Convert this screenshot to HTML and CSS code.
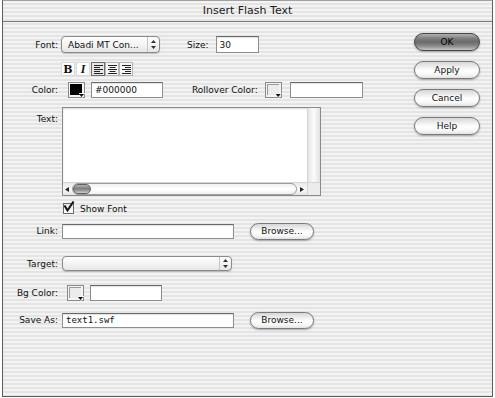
FILE: index.html
```html
<!DOCTYPE html>
<html lang="en">
<head>
    <meta charset="UTF-8">
    <title>Insert Flash Text</title>
    <link rel="stylesheet" href="styles.css">
</head>
<body>
    <div class="window">
        <div class="titlebar">Insert Flash Text</div>

        <div class="content">
            <div class="form">
                <!-- Font and size -->
                <div class="row row-font">
                    <span class="label">Font:</span>
                    <div class="popup popup-font">
                        <span class="popup-text">Abadi MT Con...</span>
                        <span class="popup-arrows">
                            <svg width="5" height="9" viewBox="0 0 5 9"><path d="M2.5 0 L5 3 L0 3 Z M0 6 L5 6 L2.5 9 Z" fill="#333"/></svg>
                        </span>
                    </div>
                    <span class="label-inline size-label">Size:</span>
                    <input class="field field-size" type="text" value="30">
                </div>

                <!-- Style buttons -->
                <div class="row row-style">
                    <span class="tool tool-b">B</span>
                    <span class="tool tool-i">I</span>
                    <span class="tool tool-on">
                        <svg width="9" height="9" viewBox="0 0 9 9"><path d="M0 0.5H9M0 2.5H6M0 4.5H9M0 6.5H6M0 8.5H9" stroke="#222" stroke-width="1"/></svg>
                    </span>
                    <span class="tool">
                        <svg width="9" height="9" viewBox="0 0 9 9"><path d="M0 0.5H9M1.5 2.5H7.5M0 4.5H9M1.5 6.5H7.5M0 8.5H9" stroke="#222" stroke-width="1"/></svg>
                    </span>
                    <span class="tool">
                        <svg width="9" height="9" viewBox="0 0 9 9"><path d="M0 0.5H9M3 2.5H9M0 4.5H9M3 6.5H9M0 8.5H9" stroke="#222" stroke-width="1"/></svg>
                    </span>
                </div>

                <!-- Colors -->
                <div class="row row-color">
                    <span class="label">Color:</span>
                    <span class="swatch swatch-color"><span class="swatch-fill black"></span></span>
                    <input class="field field-hex" type="text" value="#000000">
                    <span class="label-inline rollover-label">Rollover Color:</span>
                    <span class="swatch swatch-rollover"><span class="swatch-fill"></span></span>
                    <input class="field field-rollover" type="text" value="">
                </div>

                <!-- Text area -->
                <div class="row row-text">
                    <span class="label label-top">Text:</span>
                    <div class="textbox">
                        <div class="text-area"></div>
                        <div class="vscroll"></div>
                        <div class="hscroll">
                            <svg class="arrow" width="9" height="7" viewBox="0 0 9 7"><path d="M2 3.5 L6 1 L6 6 Z" fill="#222"/></svg>
                            <div class="htrack"><div class="thumb"></div></div>
                            <svg class="arrow" width="10" height="7" viewBox="0 0 10 7"><path d="M7 3.5 L3 1 L3 6 Z" fill="#222"/></svg>
                        </div>
                        <div class="corner"></div>
                    </div>
                </div>

                <!-- Show font -->
                <div class="row row-check">
                    <span class="checkbox">
                        <svg width="12" height="12" viewBox="0 0 12 12"><path d="M1.5 4.5 L4.5 9.5 L10.5 0.5" fill="none" stroke="#111" stroke-width="2"/></svg>
                    </span>
                    <span class="check-text">Show Font</span>
                </div>

                <!-- Link -->
                <div class="row row-link">
                    <span class="label">Link:</span>
                    <input class="field field-wide" type="text" value="">
                    <button class="btn btn-browse">Browse...</button>
                </div>

                <!-- Target -->
                <div class="row row-target">
                    <span class="label">Target:</span>
                    <div class="popup popup-target">
                        <span class="popup-text"></span>
                        <span class="popup-arrows">
                            <svg width="5" height="9" viewBox="0 0 5 9"><path d="M2.5 0 L5 3 L0 3 Z M0 6 L5 6 L2.5 9 Z" fill="#333"/></svg>
                        </span>
                    </div>
                </div>

                <!-- Background color -->
                <div class="row row-bg">
                    <span class="label">Bg Color:</span>
                    <span class="swatch swatch-bg"><span class="swatch-fill"></span></span>
                    <input class="field field-hex" type="text" value="">
                </div>

                <!-- Save as -->
                <div class="row row-save">
                    <span class="label">Save As:</span>
                    <input class="field field-wide mono" type="text" value="text1.swf">
                    <button class="btn btn-browse">Browse...</button>
                </div>
            </div>

            <div class="buttons">
                <button class="btn btn-default">OK</button>
                <button class="btn">Apply</button>
                <button class="btn">Cancel</button>
                <button class="btn">Help</button>
            </div>
        </div>
    </div>
</body>
</html>
```

FILE: styles.css
```css
body {
    margin: 0;
    background: #ffffff;
    font-family: "DejaVu Sans", Verdana, sans-serif;
    font-size: 9px;
    color: #111;
}

.window {
    width: 491px;
    height: 397px;
    box-sizing: border-box;
    margin-left: 2px;
    border: 1px solid #5c5c5c;
    border-top-color: #a0a0a0;
    background: repeating-linear-gradient(to bottom, #f3f3f3 0, #f3f3f3 2px, #e4e4e4 2px, #e4e4e4 4px);
    display: flex;
    flex-direction: column;
}

.titlebar {
    height: 20px;
    line-height: 20px;
    border-bottom: 1px solid #777;
    text-align: center;
    font-size: 11px;
    color: #1c1c1c;
}

.content {
    flex: 1;
    display: flex;
}

.form {
    display: flex;
    flex-direction: column;
    width: 380px;
}

.row {
    display: flex;
    align-items: center;
}

.label {
    width: 55px;
    margin-right: 4px;
    text-align: right;
    flex-shrink: 0;
}

.label-top {
    align-self: flex-start;
    padding-top: 7px;
}

/* row positions */
.row-font { height: 17px; margin-top: 14px; }
.row-style { height: 14px; margin-top: 9px; padding-left: 58px; }
.row-color { height: 16px; margin-top: 6px; }
.row-text { height: 89px; margin-top: 9px; align-items: stretch; }
.row-check { height: 11px; margin-top: 7px; padding-left: 60px; }
.row-link { height: 18px; margin-top: 8px; }
.row-target { height: 15px; margin-top: 16px; }
.row-bg { height: 16px; margin-top: 14px; }
.row-save { height: 18px; margin-top: 10px; }

/* text fields */
.field {
    box-sizing: border-box;
    height: 16px;
    margin: 0;
    padding: 0 3px;
    border: 1px solid #8e8e8e;
    border-top-color: #6a6a6a;
    background: #ffffff;
    box-shadow: inset 0 1px 1px rgba(0, 0, 0, 0.12);
    font-family: "DejaVu Sans", Verdana, sans-serif;
    font-size: 9px;
    color: #111;
    outline: none;
}

.field-size { width: 43px; height: 17px; margin-left: 7px; }
.field-hex { width: 72px; margin-left: 6px; }
.field-rollover { width: 73px; margin-left: 8px; }
.field-wide { width: 172px; height: 15px; }
.mono { font-family: "DejaVu Sans Mono", "Liberation Mono", monospace; }

.size-label { margin-left: 27px; }
.rollover-label { margin-left: 29px; }

/* popup menus */
.popup {
    box-sizing: border-box;
    display: flex;
    align-items: center;
    height: 17px;
    margin-left: -1px;
    border: 1px solid #8a8a8a;
    border-radius: 4px;
    background: linear-gradient(#ffffff, #f4f4f4 50%, #e6e6e6);
    box-shadow: 0 1px 1px rgba(0, 0, 0, 0.2);
}

.popup-font { width: 99px; }
.popup-target { width: 170px; height: 15px; margin-left: 0; }

.popup-text {
    flex: 1;
    padding-left: 6px;
    white-space: nowrap;
    overflow: hidden;
}

.popup-arrows {
    width: 11px;
    height: 100%;
    border-left: 1px solid #c4c4c4;
    display: flex;
    align-items: center;
    justify-content: center;
}

/* bold / italic / align */
.tool {
    box-sizing: border-box;
    width: 14px;
    height: 14px;
    border: 1px solid #b4b4b4;
    background: #f6f6f6;
    display: flex;
    align-items: center;
    justify-content: center;
}

.tool-b {
    font-family: "DejaVu Serif", "Liberation Serif", serif;
    font-weight: bold;
    font-size: 11px;
    border-color: #d8d8d8;
    background: #ffffff;
}

.tool-i {
    font-family: "Liberation Serif", serif;
    font-style: italic;
    font-weight: bold;
    font-size: 12px;
    border-color: #d8d8d8;
    background: #ffffff;
    margin-left: 1px;
}

.tool-on {
    border-color: #6e6e6e;
    background: #e6e6e6;
    margin-left: 1px;
}

/* colour swatches */
.swatch {
    position: relative;
    box-sizing: border-box;
    width: 17px;
    height: 16px;
    margin-left: 6px;
    padding: 1px 2px 2px 1px;
    border: 1px solid #8a8a8a;
    background: #f4f4f4;
}

.swatch-rollover { margin-left: 7px; }
.swatch-bg { margin-left: 5px; }

.swatch-fill {
    display: block;
    width: 100%;
    height: 100%;
    background: #ececec;
    box-shadow: inset 1px 1px 0 #9a9a9a;
}

.swatch-fill.black {
    background: #000000;
    box-shadow: none;
}

/* little drop-down notch in the corner */
.swatch::after {
    content: "";
    position: absolute;
    right: -1px;
    bottom: -1px;
    width: 6px;
    height: 4px;
    background: #f4f4f4;
    clip-path: polygon(0 0, 100% 0, 50% 100%);
    border-top: 1px solid #f4f4f4;
}

.swatch::before {
    content: "";
    position: absolute;
    right: 0;
    bottom: 0;
    width: 5px;
    height: 3px;
    background: #111;
    clip-path: polygon(0 0, 100% 0, 50% 100%);
    z-index: 1;
}

/* text box */
.textbox {
    box-sizing: border-box;
    width: 259px;
    border: 1px solid #8a8a8a;
    display: grid;
    grid-template-columns: 1fr 13px;
    grid-template-rows: 1fr 13px;
    background: #ffffff;
    box-shadow: inset 0 1px 2px rgba(0, 0, 0, 0.15);
}

.vscroll {
    border-left: 1px solid #d4d4d4;
    background: linear-gradient(to right, #e6e6e6, #fbfbfb 50%, #e2e2e2);
}

.hscroll {
    display: flex;
    align-items: center;
    border-top: 1px solid #d4d4d4;
    background: linear-gradient(#e8e8e8, #fafafa 50%, #e4e4e4);
}

.arrow { flex-shrink: 0; }

.htrack {
    flex: 1;
    height: 10px;
    border: 1px solid #9c9c9c;
    border-radius: 6px;
    background: linear-gradient(#f0f0f0, #ffffff 50%, #f0f0f0);
    display: flex;
    align-items: center;
}

.thumb {
    width: 18px;
    height: 10px;
    border: 1px solid #606060;
    border-radius: 6px;
    box-sizing: border-box;
    background: linear-gradient(#b4b4b4, #7e7e7e 45%, #9a9a9a 70%, #d0d0d0);
}

.corner {
    border-top: 1px solid #d4d4d4;
    border-left: 1px solid #d4d4d4;
    background: #ececec;
}

/* checkbox */
.checkbox {
    position: relative;
    box-sizing: border-box;
    width: 11px;
    height: 11px;
    border: 1px solid #6a6a6a;
    background: linear-gradient(#e4e4e4, #ffffff);
}

.checkbox svg {
    position: absolute;
    left: -1px;
    top: -3px;
}

.check-text { margin-left: 6px; }

/* aqua buttons */
.btn {
    box-sizing: border-box;
    height: 18px;
    padding: 0;
    border: 1px solid #7a7a7a;
    border-radius: 9px;
    background: linear-gradient(#d6d6d6 0%, #f2f2f2 35%, #ffffff 55%, #f6f6f6 80%, #e2e2e2 100%);
    box-shadow: 0 1px 2px rgba(0, 0, 0, 0.3);
    font-family: "DejaVu Sans", Verdana, sans-serif;
    font-size: 9px;
    color: #111;
    cursor: pointer;
}

.btn-browse {
    width: 64px;
    height: 17px;
    margin-left: 16px;
}

.btn-default {
    border-color: #474747;
    background: linear-gradient(#b0b0b0 0%, #7c7c7c 30%, #6a6a6a 50%, #8a8a8a 75%, #c6c6c6 100%);
    color: #000;
}

.buttons {
    margin-left: auto;
    margin-right: 12px;
    padding-top: 11px;
    width: 66px;
    display: flex;
    flex-direction: column;
    gap: 10px;
}
```
